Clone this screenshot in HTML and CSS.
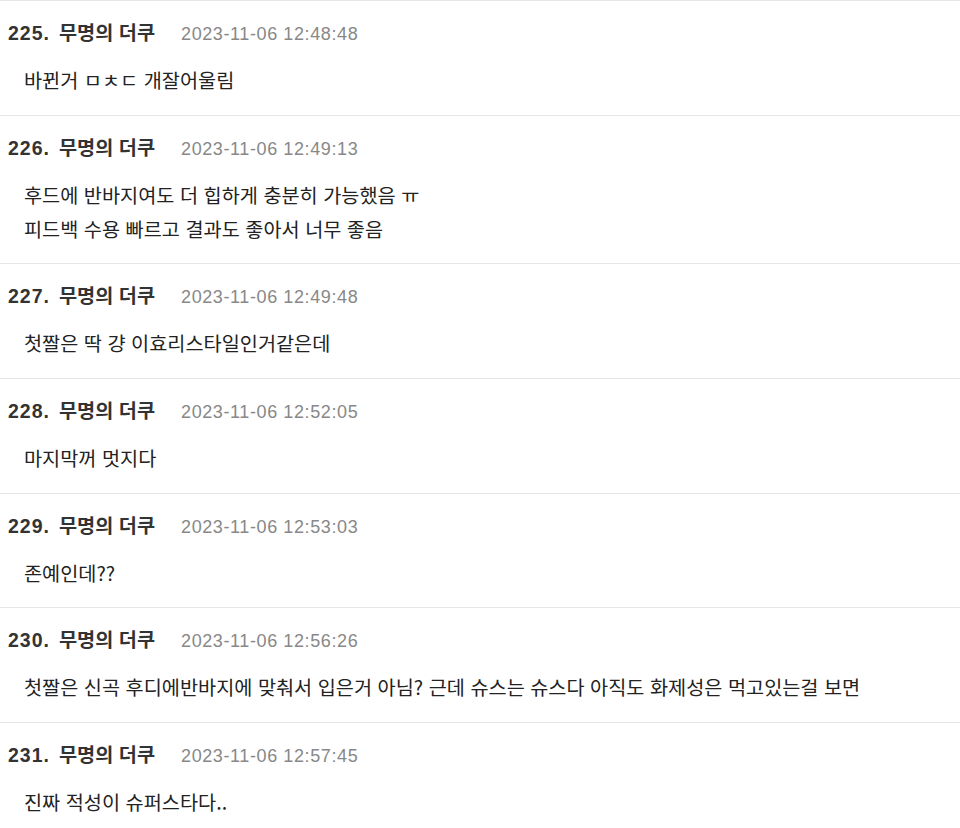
FILE: index.html
```html
<!DOCTYPE html>
<html lang="ko">
<head>
<meta charset="utf-8">
<title>댓글</title>
<link rel="stylesheet" href="styles.css">
</head>
<body>
<ul class="comments">
  <li class="comment">
    <div class="head"><span class="num">225.</span><span class="name">무명의 더쿠</span><span class="time">2023-11-06 12:48:48</span></div>
    <div class="body">바뀐거 ㅁㅊㄷ 개잘어울림</div>
  </li>
  <li class="comment">
    <div class="head"><span class="num">226.</span><span class="name">무명의 더쿠</span><span class="time">2023-11-06 12:49:13</span></div>
    <div class="body">후드에 반바지여도 더 힙하게 충분히 가능했음 ㅠ<br>피드백 수용 빠르고 결과도 좋아서 너무 좋음</div>
  </li>
  <li class="comment">
    <div class="head"><span class="num">227.</span><span class="name">무명의 더쿠</span><span class="time">2023-11-06 12:49:48</span></div>
    <div class="body">첫짤은 딱 걍 이효리스타일인거같은데</div>
  </li>
  <li class="comment">
    <div class="head"><span class="num">228.</span><span class="name">무명의 더쿠</span><span class="time">2023-11-06 12:52:05</span></div>
    <div class="body">마지막꺼 멋지다</div>
  </li>
  <li class="comment">
    <div class="head"><span class="num">229.</span><span class="name">무명의 더쿠</span><span class="time">2023-11-06 12:53:03</span></div>
    <div class="body">존예인데??</div>
  </li>
  <li class="comment">
    <div class="head"><span class="num">230.</span><span class="name">무명의 더쿠</span><span class="time">2023-11-06 12:56:26</span></div>
    <div class="body">첫짤은 신곡 후디에반바지에 맞춰서 입은거 아님? 근데 슈스는 슈스다 아직도 화제성은 먹고있는걸 보면</div>
  </li>
  <li class="comment">
    <div class="head"><span class="num">231.</span><span class="name">무명의 더쿠</span><span class="time">2023-11-06 12:57:45</span></div>
    <div class="body">진짜 적성이 슈퍼스타다..</div>
  </li>
</ul>
</body>
</html>
```
FILE: styles.css
```css
html, body {
  margin: 0;
  padding: 0;
  background: #ffffff;
}
body {
  font-family: "Liberation Sans", "Noto Sans CJK KR", sans-serif;
  color: #222222;
}
.comments {
  list-style: none;
  margin: 0;
  padding: 0;
}
.comment {
  border-top: 1px solid #e6e6e6;
  padding: 16px 0 17.67px 8px;
}
.head {
  display: flex;
  align-items: baseline;
  height: 30px;
  line-height: 30px;
  white-space: pre;
}
.num {
  font-size: 19.5px;
  font-weight: bold;
  color: #333333;
  letter-spacing: 1px;
}
.name {
  font-family: "Noto Sans CJK KR", sans-serif;
  font-size: 19.7px;
  font-weight: bold;
  color: #333333;
  margin-left: 9px;
}
.time {
  font-size: 18px;
  color: #888888;
  margin-left: 26px;
  letter-spacing: 0.6px;
}
.body {
  margin-top: 16px;
  padding-left: 16px;
  font-family: "Noto Sans CJK KR", sans-serif;
  font-size: 19.7px;
  line-height: 34px;
  color: #222222;
}
```
